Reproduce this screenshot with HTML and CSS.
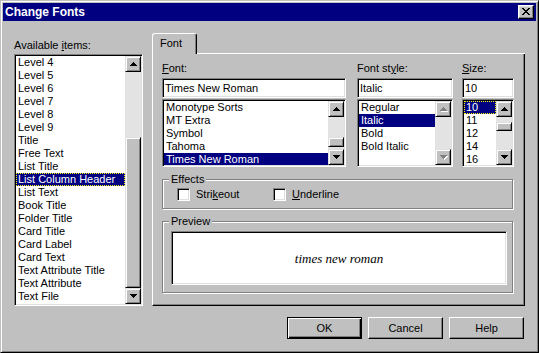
FILE: index.html
```html
<!DOCTYPE html>
<html lang="en">
  <head>
    <meta charset="UTF-8" />
    <title>Change Fonts</title>
    <link rel="stylesheet" href="styles.css">
  </head>
  <body>
    <div class="window">
      <div class="titlebar">
        <span class="title">Change Fonts</span>
        <button class="close-btn raised">
          <svg width="8" height="7" viewBox="0 0 8 7" shape-rendering="crispEdges"><path d="M0 0h2v1H0zM6 0h2v1H6zM1 1h2v1H1zM5 1h2v1H5zM2 2h4v1H2zM3 3h2v1H3zM2 4h4v1H2zM1 5h2v1H1zM5 5h2v1H5zM0 6h2v1H0zM6 6h2v1H6z"/></svg>
        </button>
      </div>

      <div class="main">
        <div class="items-col">
          <div class="label">Available <u>i</u>tems:</div>
          <div class="listbox items-list">
            <ul class="list">
              <li>Level 4</li>
              <li>Level 5</li>
              <li>Level 6</li>
              <li>Level 7</li>
              <li>Level 8</li>
              <li>Level 9</li>
              <li>Title</li>
              <li>Free Text</li>
              <li>List Title</li>
              <li class="sel focus">List Column Header</li>
              <li>List Text</li>
              <li>Book Title</li>
              <li>Folder Title</li>
              <li>Card Title</li>
              <li>Card Label</li>
              <li>Card Text</li>
              <li>Text Attribute Title</li>
              <li>Text Attribute</li>
              <li>Text File</li>
            </ul>
            <div class="scrollbar">
              <div class="sb-btn"><svg width="7" height="4" viewBox="0 0 7 4" shape-rendering="crispEdges"><path d="M3 0h1v1h1v1h1v1h1v1H0V3h1V2h1V1h1z"/></svg></div>
              <div class="sb-track"><div class="sb-thumb"></div></div>
              <div class="sb-btn"><svg width="7" height="4" viewBox="0 0 7 4" shape-rendering="crispEdges"><path d="M0 0h7v1H6v1H5v1H4v1H3V3H2V2H1V1H0z"/></svg></div>
            </div>
          </div>
        </div>

        <div class="tabs-col">
          <div class="tabstrip">
            <div class="tab">Font</div>
            <div class="tab-rest"></div>
          </div>
          <div class="panel">
            <div class="pickers">
              <div class="picker picker-font">
                <div class="label"><u>F</u>ont:</div>
                <div class="field">Times New Roman</div>
                <div class="listbox font-list">
                  <ul class="list">
                    <li>Monotype Sorts</li>
                    <li>MT Extra</li>
                    <li>Symbol</li>
                    <li>Tahoma</li>
                    <li class="sel">Times New Roman</li>
                  </ul>
                  <div class="scrollbar">
                    <div class="sb-btn"><svg width="7" height="4" viewBox="0 0 7 4" shape-rendering="crispEdges"><path d="M3 0h1v1h1v1h1v1h1v1H0V3h1V2h1V1h1z"/></svg></div>
                    <div class="sb-track"><div class="sb-thumb"></div></div>
                    <div class="sb-btn"><svg width="7" height="4" viewBox="0 0 7 4" shape-rendering="crispEdges"><path d="M0 0h7v1H6v1H5v1H4v1H3V3H2V2H1V1H0z"/></svg></div>
                  </div>
                </div>
              </div>

              <div class="picker picker-style">
                <div class="label">Font st<u>y</u>le:</div>
                <div class="field">Italic</div>
                <div class="listbox style-list">
                  <ul class="list">
                    <li>Regular</li>
                    <li class="sel">Italic</li>
                    <li>Bold</li>
                    <li>Bold Italic</li>
                  </ul>
                  <div class="scrollbar">
                    <div class="sb-btn disabled"><svg width="7" height="4" viewBox="0 0 7 4" shape-rendering="crispEdges"><path d="M3 0h1v1h1v1h1v1h1v1H0V3h1V2h1V1h1z"/></svg></div>
                    <div class="sb-track"></div>
                    <div class="sb-btn disabled"><svg width="7" height="4" viewBox="0 0 7 4" shape-rendering="crispEdges"><path d="M0 0h7v1H6v1H5v1H4v1H3V3H2V2H1V1H0z"/></svg></div>
                  </div>
                </div>
              </div>

              <div class="picker picker-size">
                <div class="label"><u>S</u>ize:</div>
                <div class="field">10</div>
                <div class="listbox size-list">
                  <ul class="list">
                    <li class="sel focus">10</li>
                    <li>11</li>
                    <li>12</li>
                    <li>14</li>
                    <li>16</li>
                  </ul>
                  <div class="scrollbar">
                    <div class="sb-btn"><svg width="7" height="4" viewBox="0 0 7 4" shape-rendering="crispEdges"><path d="M3 0h1v1h1v1h1v1h1v1H0V3h1V2h1V1h1z"/></svg></div>
                    <div class="sb-track"><div class="sb-thumb"></div></div>
                    <div class="sb-btn"><svg width="7" height="4" viewBox="0 0 7 4" shape-rendering="crispEdges"><path d="M0 0h7v1H6v1H5v1H4v1H3V3H2V2H1V1H0z"/></svg></div>
                  </div>
                </div>
              </div>
            </div>

            <fieldset class="group effects">
              <legend>Effects</legend>
              <div class="checks">
                <div class="check"><span class="box"></span><span>Stri<u>k</u>eout</span></div>
                <div class="check"><span class="box"></span><span><u>U</u>nderline</span></div>
              </div>
            </fieldset>

            <fieldset class="group preview">
              <legend>Preview</legend>
              <div class="preview-box">times new roman</div>
            </fieldset>
          </div>
        </div>
      </div>

      <div class="buttons">
        <button class="btn default">OK</button>
        <button class="btn">Cancel</button>
        <button class="btn">Help</button>
      </div>
    </div>
  </body>
</html>
```

FILE: styles.css
```css
body {
  margin: 0;
  background: #c0c0c0;
  font-family: "Liberation Sans", Arial, sans-serif;
  font-size: 11px;
  line-height: 13px;
  color: #000;
}
.window {
  box-sizing: border-box;
  width: 539px;
  height: 353px;
  padding: 2px;
  border: 1px solid;
  border-color: #c0c0c0 #000 #000 #c0c0c0;
  box-shadow: inset 1px 1px #fff, inset -1px -1px #808080;
  background: #c0c0c0;
}
.raised {
  box-sizing: border-box;
  border: 1px solid;
  border-color: #fff #000 #000 #fff;
  box-shadow: inset -1px -1px #808080, inset 1px 1px #dfdfdf;
  background: #c0c0c0;
}
.titlebar {
  display: flex;
  align-items: center;
  justify-content: space-between;
  height: 18px;
  padding: 0 2px;
  background: #000080;
  color: #fff;
}
.title {
  font-weight: bold;
  font-size: 12px;
  line-height: 18px;
}
.close-btn {
  display: flex;
  align-items: center;
  justify-content: center;
  width: 16px;
  height: 14px;
  padding: 0 0 1px 0;
}
.close-btn svg {
  fill: #000;
}

/* main area */
.main {
  display: flex;
  align-items: flex-end;
  gap: 9px;
  padding: 12px 11px 0;
}
.items-col {
  width: 129px;
}
.items-col .label {
  margin-bottom: 2px;
}
.tabs-col {
  flex: 1;
}

/* list boxes */
.listbox {
  display: flex;
  box-sizing: border-box;
  padding: 1px;
  border: 1px solid;
  border-color: #808080 #fff #fff #808080;
  box-shadow: inset 1px 1px #000, inset -1px -1px #dfdfdf;
  background: #fff;
}
.items-list {
  height: 252px;
}
.list {
  flex: 1;
  margin: 0;
  padding: 0;
  list-style: none;
  overflow: hidden;
}
.list li {
  height: 13px;
  padding-left: 2px;
  white-space: nowrap;
}
.list li.sel {
  background: #000080;
  color: #fff;
}
.list li.focus {
  outline: 1px dotted #ffff00;
  outline-offset: -1px;
}

/* scrollbars */
.scrollbar {
  display: flex;
  flex-direction: column;
  width: 16px;
  background: #e3e3e3;
}
.sb-btn,
.sb-thumb {
  box-sizing: border-box;
  border: 1px solid;
  border-color: #dfdfdf #000 #000 #dfdfdf;
  box-shadow: inset 1px 1px #fff, inset -1px -1px #808080;
  background: #c0c0c0;
}
.sb-btn {
  display: flex;
  align-items: center;
  justify-content: center;
  height: 16px;
}
.sb-btn svg {
  fill: #000;
}
.sb-btn.disabled svg {
  fill: #808080;
  filter: drop-shadow(1px 1px 0 #fff);
}
.sb-track {
  flex: 1;
}
.items-list .sb-thumb {
  margin-top: 65px;
  height: 151px;
}
.font-list .sb-thumb {
  margin-top: 20px;
  height: 10px;
}
.size-list .sb-thumb {
  margin-top: 5px;
  height: 9px;
}

/* tab control */
.tabstrip {
  display: flex;
  height: 21px;
}
.tab {
  box-sizing: border-box;
  width: 45px;
  height: 21px;
  padding: 3px 0 0 7px;
  border: 1px solid;
  border-bottom: none;
  border-color: #fff #000 #fff #fff;
  border-radius: 3px 3px 0 0;
  box-shadow: inset -1px 0 #808080;
}
.tab-rest {
  flex: 1;
  box-sizing: border-box;
  border-bottom: 1px solid #fff;
}
.panel {
  box-sizing: border-box;
  height: 252px;
  padding: 8px 10px 0 9px;
  border-left: 1px solid #fff;
  border-right: 1px solid #000;
  border-bottom: 1px solid #000;
  box-shadow: inset -1px -1px #808080;
}

/* font pickers */
.pickers {
  display: flex;
}
.picker-font {
  width: 184px;
  margin-right: 11px;
}
.picker-style {
  width: 96px;
  margin-right: 9px;
}
.picker-size {
  width: 52px;
}
.field {
  box-sizing: border-box;
  height: 20px;
  margin-top: 3px;
  padding: 1px 2px;
  line-height: 16px;
  border: 1px solid;
  border-color: #808080 #fff #fff #808080;
  box-shadow: inset 1px 1px #000, inset -1px -1px #dfdfdf;
  background: #fff;
  white-space: nowrap;
}
.picker .listbox {
  height: 68px;
  margin-top: 1px;
}

/* group boxes */
.group {
  margin: 6px 1px 0 0;
  padding: 0 5px 0 6px;
  min-width: 0;
  border: 1px solid #808080;
  box-shadow: 1px 1px #fff, inset 1px 1px #fff;
}
.group legend {
  padding: 0 2px;
  line-height: 13px;
  background: #c0c0c0;
}
.checks {
  display: flex;
  padding: 2px 0 7px 8px;
}
.check {
  display: flex;
  align-items: center;
  gap: 6px;
  width: 96px;
}
.box {
  box-sizing: border-box;
  width: 13px;
  height: 13px;
  border: 1px solid;
  border-color: #808080 #fff #fff #808080;
  box-shadow: inset 1px 1px #000, inset -1px -1px #dfdfdf;
  background: #fff;
}
.preview-box {
  display: flex;
  align-items: center;
  justify-content: center;
  box-sizing: border-box;
  height: 54px;
  margin: 3px 0 7px 2px;
  border: 1px solid;
  border-color: #808080 #fff #fff #808080;
  box-shadow: inset 1px 1px #000, inset -1px -1px #dfdfdf;
  background: #fff;
  font-family: "Liberation Serif", "Times New Roman", serif;
  font-style: italic;
  font-size: 13px;
}

/* dialog buttons */
.buttons {
  display: flex;
  justify-content: flex-end;
  gap: 6px;
  padding: 11px 12px 0 0;
}
.btn {
  box-sizing: border-box;
  width: 75px;
  height: 22px;
  padding: 0;
  font: inherit;
  color: #000;
  border: 1px solid;
  border-color: #fff #000 #000 #fff;
  box-shadow: inset -1px -1px #808080;
  background: #c0c0c0;
}
.btn.default {
  border-color: #000;
  box-shadow: inset 1px 1px #fff, inset -1px -1px #000, inset -2px -2px #808080;
}
```
